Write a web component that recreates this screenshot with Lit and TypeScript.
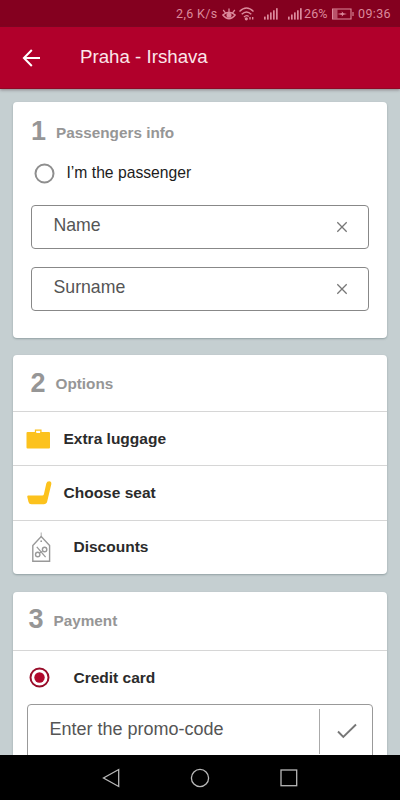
import { LitElement, html, svg, css } from "lit";
import { customElement } from "lit/decorators.js";

const signal = (last: boolean) => html`<svg class="signal ${last ? "last" : ""}" width="15" height="13" viewBox="0 0 15 13">
  ${[0, 1, 2, 3, 4].map((i) => svg`<rect x=${i * 3} y=${9.6 - i * 2.1} width="1.7" height=${3 + i * 2.1} fill="currentColor"/>`)}
</svg>`;

const clear = html`<svg width="12" height="12" viewBox="0 0 12 12" fill="none" stroke="#777" stroke-width="1.3">
  <path d="M1.3 1.3 10.7 10.7M10.7 1.3 1.3 10.7"/></svg>`;

@customElement("app-root")
export class AppRoot extends LitElement {
  static styles = css`
    :host {
      display: flex;
      flex-direction: column;
      width: 400px;
      height: 800px;
      overflow: hidden;
      background: #c5cfd1;
      font-family: "Liberation Sans", Arial, sans-serif;
      white-space: nowrap;
    }
    * { box-sizing: border-box; }
    svg { display: block; flex: none; }
    .status {
      flex: none;
      height: 27px;
      background: #84001f;
      color: #dc8a9c;
      display: flex;
      align-items: center;
      padding-left: 176px;
      font: 12.5px/27px Roboto, sans-serif;
    }
    .status span { flex: none; height: 27px; }
    .speed { width: 46px; letter-spacing: 0.35px; }
    .signal { margin-right: 9px; }
    .signal.last { margin-right: 1px; }
    .pct { width: 28px; letter-spacing: 0.1px; }
    .time { margin-left: 4px; letter-spacing: 0.35px; }
    .bar {
      flex: none;
      height: 62px;
      background: #b1002b;
      border-bottom: 1px solid #8f0924;
      box-shadow: 0 1px 3px rgba(80, 60, 70, 0.5);
      display: flex;
      align-items: center;
      padding-left: 22px;
      position: relative;
    }
    .bar h1 {
      margin: 0 0 1px 39px;
      font-size: 18.7px;
      font-weight: 400;
      color: #fbe6ea;
    }
    main {
      flex: 1;
      min-height: 0;
      overflow: hidden;
      padding: 13px 13px 0;
      display: flex;
      flex-direction: column;
    }
    .card {
      flex: none;
      background: #fff;
      border-radius: 4px;
      box-shadow: 0 1px 2px rgba(70, 90, 95, 0.4);
      overflow: hidden;
    }
    .passengers { height: 236px; margin-bottom: 17px; padding: 0 18px; }
    .options { height: 219px; margin-bottom: 18px; }
    .payment { height: 240px; }
    .head { display: flex; align-items: flex-start; color: #969696; font-weight: 700; }
    .head b { font-size: 27px; line-height: 30px; width: 25px; }
    .head span { font-size: 15.3px; line-height: 18px; padding-top: 7px; }
    .passengers .head { height: 58px; padding-top: 14px; }
    .passengers .head span { padding-top: 8px; }
    .options .head { height: 56px; padding: 13px 0 0 17.5px; }
    .payment .head { height: 58px; padding: 12px 0 0 15.5px; }
    .payment .head span { padding-top: 8px; }
    .me { height: 26px; display: flex; align-items: center; padding-left: 3px; font-size: 15.7px; color: #1c1c1c; }
    .me svg { margin-right: 11.5px; }
    .field {
      height: 44px;
      border: 1px solid #888;
      border-radius: 4px;
      display: flex;
      align-items: center;
      justify-content: space-between;
      padding: 0 20px 0 21.5px;
      color: #555;
      font-size: 17.7px;
    }
    .field span { margin-bottom: 4px; }
    .field svg { margin-bottom: 1px; }
    .first { margin-top: 19px; margin-bottom: 18px; }
    .row {
      height: 54.4px;
      border-top: 1px solid #d6d6d6;
      display: flex;
      align-items: center;
      font-size: 15.5px;
      font-weight: 700;
      color: #2b2b2b;
    }
    .ico { width: 50.5px; padding-left: 13px; flex: none; }
    .wide { width: 60.5px; padding-left: 16px; }
    .promo {
      height: 60px;
      margin: 0 14px;
      border: 1px solid #999;
      border-radius: 4px;
      display: flex;
      color: #555;
      font-size: 18px;
      padding-left: 21.5px;
    }
    .promo span { width: 269.5px; padding-top: 14px; }
    .ok { width: 53px; height: 45px; margin-top: 4px; border-left: 1px solid #aaa; padding: 14px 0 0 17px; }
    .nav {
      flex: none;
      height: 45px;
      background: #000;
      display: flex;
      justify-content: center;
      align-items: center;
      gap: 68px;
    }
  `;

  render() {
    return html`
      <div class="status">
        <span class="speed">2,6 K/s</span>
        <svg width="14" height="14" viewBox="0 0 14 14" fill="none" stroke="currentColor" stroke-width="1.3">
          <path d="M.8 8Q7 2.500 13.200 8Q7 15.500.8 8ZM1.200 3 3.200 5.600M7 1.500v3M12.800 3 10.800 5.600"/>
          <circle cx="7" cy="8.300" r="1.900" fill="currentColor"/>
        </svg>
        <svg width="28" height="15" viewBox="0 0 28 15" fill="none" stroke="currentColor" stroke-width="1.4">
          <path d="M3.500 5.500Q10.500-1.500 17.500 5.500M5.700 8.300Q10.500 3.600 15.300 8.300M8 11Q10.500 8.500 12.700 10.500"/>
          <circle cx="10.300" cy="12.800" r=".9" fill="currentColor"/>
          <path d="M14 11v2.500M16.700 11v2.500"/>
        </svg>
        ${signal(false)}${signal(true)}
        <span class="pct">26%</span>
        <svg width="22" height="12" viewBox="0 0 22 12" fill="none" stroke="currentColor">
          <path d="M.5 1h18.500v10H.500ZM21 4v4" stroke-width="1.100"/>
          <path d="M1 1.500h4.500v9H1Z" fill="currentColor" fill-opacity=".6" stroke="none"/>
          <path d="M5.500 6 10 5 9.700 3.200 11.500 5.200 15 6 11.500 6.700 9.700 8.700 10 7Z" fill="currentColor" stroke="none"/>
        </svg>
        <span class="time">09:36</span>
      </div>

      <header class="bar">
        <svg width="19" height="18" viewBox="0 0 19 18" fill="none" stroke="#fff" stroke-width="2">
          <path d="M18 9H2M9.800 1 1.900 9l7.900 8"/>
        </svg>
        <h1>Praha - Irshava</h1>
      </header>

      <main>
        <section class="card passengers">
          <div class="head"><b>1</b><span>Passengers info</span></div>
          <div class="me">
            <svg width="21" height="21" viewBox="0 0 21 21"><circle cx="10.500" cy="10.500" r="9" fill="none" stroke="#8e8e8e" stroke-width="2"/></svg>
            <span>I’m the passenger</span>
          </div>
          <div class="field first"><span>Name</span>${clear}</div>
          <div class="field"><span>Surname</span>${clear}</div>
        </section>

        <section class="card options">
          <div class="head"><b>2</b><span>Options</span></div>
          <div class="row">
            <div class="ico">
              <svg width="25" height="20" viewBox="0 0 25 20" fill="#fcc21d">
                <path d="M1.500 3h21.500q1 0 1 1v14.500q0 1-1 1h-21.500q-1 0-1-1V4q0-1 1-1Z"/>
                <path d="M9.500 3.800V1.100h5.400V3.800" fill="none" stroke="#fcc21d" stroke-width="1.300"/>
                <path d="M10.300 2.300h3.800V4.100h-3.800Z" fill="#fff"/>
              </svg>
            </div>
            <span>Extra luggage</span>
          </div>
          <div class="row">
            <div class="ico">
              <svg width="26" height="24" viewBox="0 0 26 24" fill="#fcc21d">
                <path d="M2 14.500H16.300Q17.600 14.500 17.900 13.200L20.300 2.500Q20.900.300 23.100.300Q25.800.500 25.300 3.300L21.200 20.500Q20.500 23.300 17.700 23.300H5.500Q3 23.300 2.500 21L1.300 16Q1 14.600 2 14.500Z"/>
              </svg>
            </div>
            <span>Choose seat</span>
          </div>
          <div class="row">
            <div class="ico wide">
              <svg width="24" height="32" viewBox="0 0 24 32" fill="none" stroke="#999" stroke-width="1.400">
                <path d="M3.800 30.200V14.500L12.200 5.500 20.600 14.500V30.200Z"/>
                <path d="M12.200 1.500V6" stroke-width=".8"/>
                <circle cx="12.200" cy="10.200" r=".9" fill="#999" stroke="none"/>
                <circle cx="8.700" cy="23.500" r="2.200"/><circle cx="15.600" cy="18.500" r="2.200"/>
                <path d="M7.800 15.800 16.600 26.200" stroke-width="1.300"/>
                <path d="M10.500 22.200 13.800 19.800" stroke-width="1"/>
              </svg>
            </div>
            <span>Discounts</span>
          </div>
        </section>

        <section class="card payment">
          <div class="head"><b>3</b><span>Payment</span></div>
          <div class="row">
            <div class="ico wide">
              <svg width="21" height="21" viewBox="0 0 21 21"><circle cx="10.500" cy="10.500" r="9" fill="none" stroke="#980c29" stroke-width="2"/><circle cx="10.500" cy="10.500" r="5.200" fill="#b1082c"/></svg>
            </div>
            <span>Credit card</span>
          </div>
          <div class="promo">
            <span>Enter the promo-code</span>
            <div class="ok">
              <svg width="20" height="16" viewBox="0 0 20 16" fill="none" stroke="#777" stroke-width="1.900"><path d="M1 8.500 6.300 14 19 1.500"/></svg>
            </div>
          </div>
        </section>
      </main>

      <nav class="nav">
        <svg width="20" height="20" viewBox="0 0 20 20" fill="none" stroke="#b8b8b8" stroke-width="1.300"><path d="M16.700 1.500V18.500L1.500 10Z"/></svg>
        <svg width="20" height="20" viewBox="0 0 20 20" fill="none" stroke="#b8b8b8" stroke-width="1.300"><circle cx="10" cy="10" r="8.600"/></svg>
        <svg width="20" height="20" viewBox="0 0 20 20" fill="none" stroke="#b8b8b8" stroke-width="1.300"><rect x="3" y="2" width="15.700" height="15.700"/></svg>
      </nav>
    `;
  }
}
